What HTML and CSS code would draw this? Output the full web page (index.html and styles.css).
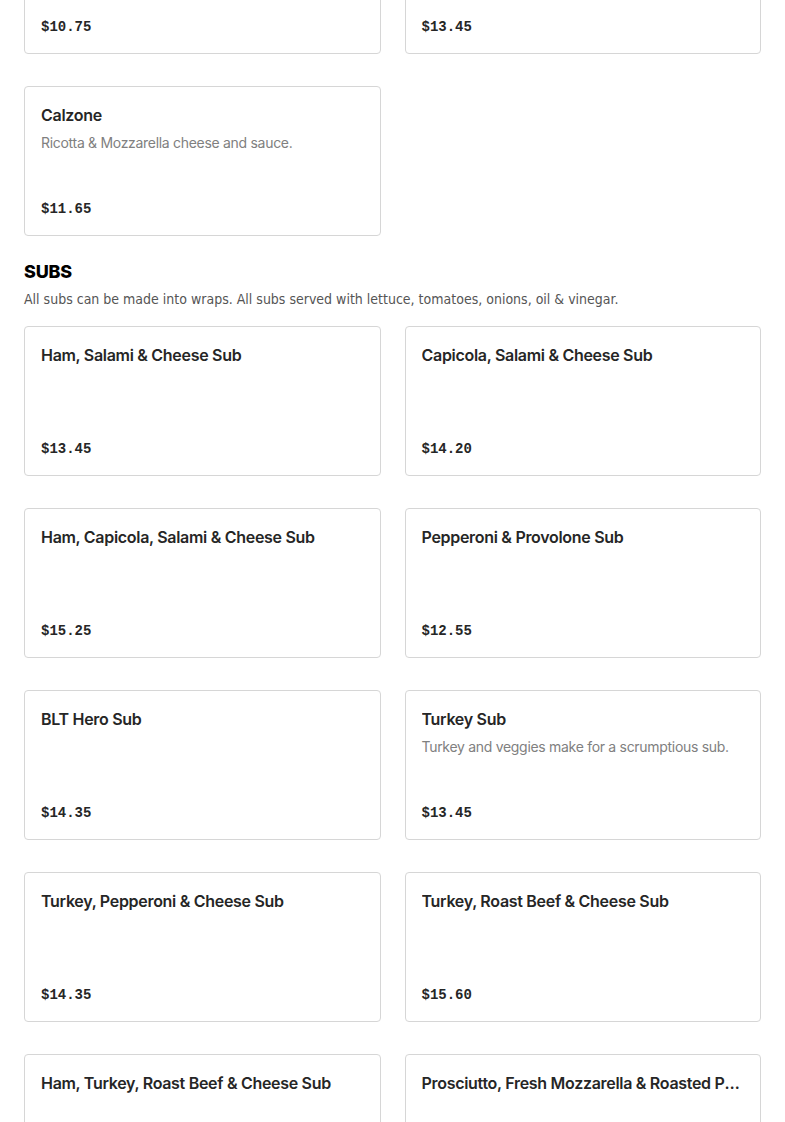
FILE: index.html
```html
<!DOCTYPE html>
<html lang="en">
<head>
<meta charset="utf-8">
<title>Menu</title>
<link rel="stylesheet" href="styles.css">
</head>
<body>
<main class="menu">
  <section class="category category-prev">
    <div class="grid">
      <article class="card"><h3 class="item-name"></h3><div class="price">$10.75</div></article>
      <article class="card"><h3 class="item-name"></h3><div class="price">$13.45</div></article>
      <article class="card"><h3 class="item-name">Calzone</h3><p class="item-desc">Ricotta &amp; Mozzarella cheese and sauce.</p><div class="price">$11.65</div></article>
    </div>
  </section>
  <section class="category">
    <h2 class="cat-title">SUBS</h2>
    <p class="cat-desc">All subs can be made into wraps. All subs served with lettuce, tomatoes, onions, oil &amp; vinegar.</p>
    <div class="grid">
      <article class="card"><h3 class="item-name">Ham, Salami &amp; Cheese Sub</h3><div class="price">$13.45</div></article>
      <article class="card"><h3 class="item-name">Capicola, Salami &amp; Cheese Sub</h3><div class="price">$14.20</div></article>
      <article class="card"><h3 class="item-name">Ham, Capicola, Salami &amp; Cheese Sub</h3><div class="price">$15.25</div></article>
      <article class="card"><h3 class="item-name">Pepperoni &amp; Provolone Sub</h3><div class="price">$12.55</div></article>
      <article class="card"><h3 class="item-name">BLT Hero Sub</h3><div class="price">$14.35</div></article>
      <article class="card"><h3 class="item-name">Turkey Sub</h3><p class="item-desc">Turkey and veggies make for a scrumptious sub.</p><div class="price">$13.45</div></article>
      <article class="card"><h3 class="item-name">Turkey, Pepperoni &amp; Cheese Sub</h3><div class="price">$14.35</div></article>
      <article class="card"><h3 class="item-name">Turkey, Roast Beef &amp; Cheese Sub</h3><div class="price">$15.60</div></article>
      <article class="card"><h3 class="item-name">Ham, Turkey, Roast Beef &amp; Cheese Sub</h3><div class="price">$16.10</div></article>
      <article class="card"><h3 class="item-name">Prosciutto, Fresh Mozzarella &amp; Roasted Peppers Sub</h3><div class="price">$16.10</div></article>
    </div>
  </section>
</main>
</body>
</html>
```

FILE: styles.css
```css
html, body {
  margin: 0;
  padding: 0;
  background: #ffffff;
}

body {
  font-family: Inter, "Noto Sans", sans-serif;
  color: #1f1f1f;
  overflow: hidden;
}

.menu {
  padding: 0 24px;
  margin-top: -96px;
}

.category + .category {
  margin-top: 24px;
}

.cat-title {
  margin: 0;
  font-size: 18px;
  line-height: 24px;
  font-weight: 800;
  color: #000;
  letter-spacing: -0.2px;
}

.cat-desc {
  margin: 5px 0 17px;
  font-family: "DejaVu Sans Condensed", "Liberation Sans Narrow", sans-serif;
  font-size: 14px;
  line-height: 20px;
  color: #555555;
}

.grid {
  display: grid;
  grid-template-columns: 1fr 1fr;
  column-gap: 24px;
  row-gap: 32px;
}

.card {
  box-sizing: border-box;
  height: 150px;
  border: 1px solid #d6d6d6;
  border-radius: 4px;
  padding: 16px;
  display: flex;
  flex-direction: column;
  min-width: 0;
}

.item-name {
  margin: 0;
  font-size: 16px;
  line-height: 24px;
  font-weight: 600;
  letter-spacing: -0.3px;
  color: #262626;
  white-space: nowrap;
  overflow: hidden;
  text-overflow: ellipsis;
  min-height: 24px;
}

.item-desc {
  margin: 6px 0 0;
  font-size: 14px;
  line-height: 20px;
  letter-spacing: -0.3px;
  color: #808080;
}

.price {
  margin-top: auto;
  font-family: "Liberation Mono", "DejaVu Sans Mono", monospace;
  font-weight: 700;
  font-size: 14px;
  line-height: 20px;
  color: #262626;
}
```
